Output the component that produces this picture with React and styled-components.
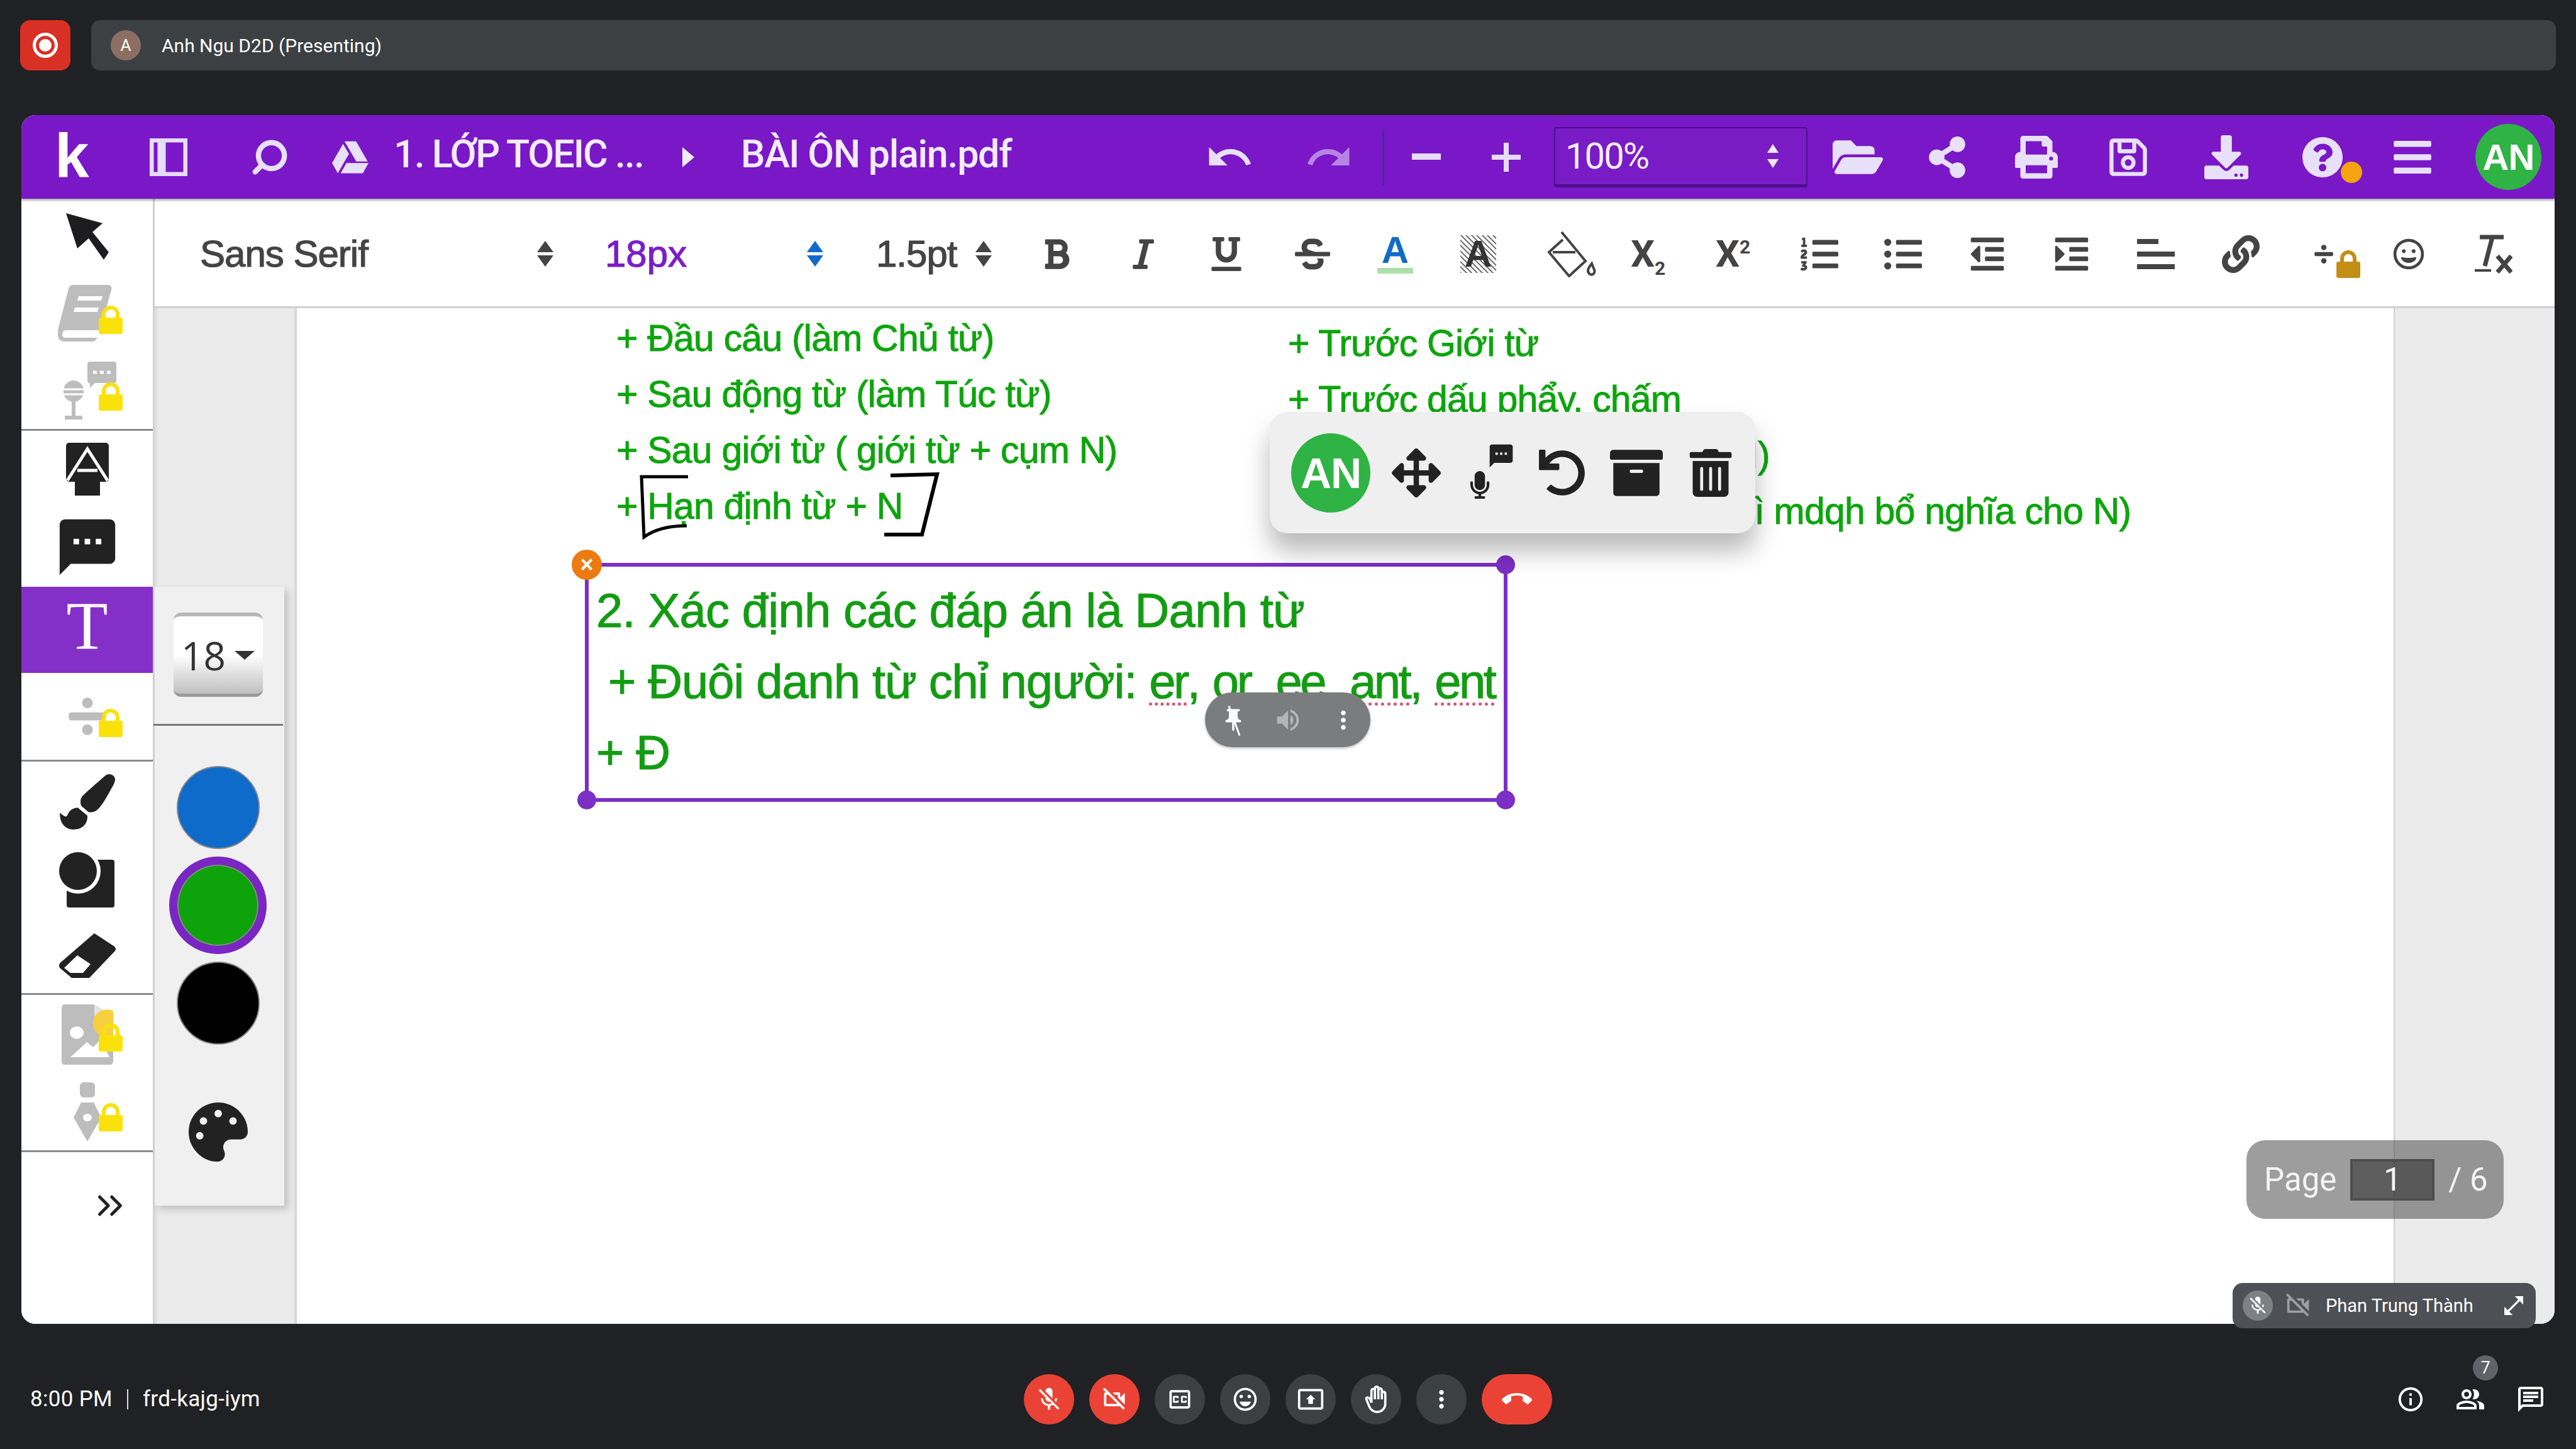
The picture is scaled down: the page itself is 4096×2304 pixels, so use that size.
import React from "react";
import styled, { createGlobalStyle } from "styled-components";
import {
  FaGoogleDrive, FaFolderOpen, FaShareAlt, FaPrint, FaRegSave, FaDownload, FaQuestionCircle, FaBars,
  FaBold, FaItalic, FaUnderline, FaStrikethrough, FaListOl, FaListUl, FaOutdent, FaIndent, FaLink, FaDivide,
  FaRegGrin, FaPaintBrush, FaPalette, FaArrowsAlt, FaUndo, FaArchive, FaTrashAlt, FaMicrophone,
} from "react-icons/fa";
import {
  MdUndo, MdRedo, MdSms, MdMicOff, MdOutlineVideocamOff, MdOutlineClosedCaption, MdOutlineEmojiEmotions,
  MdOutlinePresentToAll, MdOutlineBackHand, MdMoreVert, MdCallEnd, MdInfoOutline, MdOutlinePeopleAlt, MdOutlineChat,
  MdOutlineOpenInFull, MdVolumeUp, MdPushPin,
} from "react-icons/md";
import { Search, ChevronsRight } from "lucide-react";

const Global = createGlobalStyle`
  html, body { margin: 0; padding: 0; background: #202124; }
  * { box-sizing: border-box; }
`;

const Screen = styled.div`
  width: 4096px; height: 2304px; background: #202124; display: flex; flex-direction: column;
  font-family: "Liberation Sans", Arial, sans-serif; overflow: hidden; position: relative;
`;
const TopBar = styled.div`
  display: flex; gap: 33px; padding: 32px 32px 0 32px; height: 183px;
`;
const RecordBtn = styled.div`
  width: 80px; height: 80px; background: #d93025; border-radius: 16px; display: flex; align-items: center; justify-content: center;
`;
const RecordRing = styled.div`
  width: 40px; height: 40px; border-radius: 50%; border: 5px solid #fff; display: flex; align-items: center; justify-content: center;
  &::after { content: ""; width: 20px; height: 20px; border-radius: 50%; background: #fff; }
`;
const PresenterBar = styled.div`
  flex: 1; height: 80px; background: #3c4043; border-radius: 14px; display: flex; align-items: center; padding-left: 31px; gap: 33px;
  color: #fff; font-family: Roboto, sans-serif; font-size: 30px;
`;
const SmallAvatar = styled.div`
  width: 48px; height: 48px; border-radius: 50%; background: #8d6e63; color: #fff; display: flex; align-items: center; justify-content: center; font-size: 26px;
`;

const Window = styled.div`
  margin: 0 34px; height: 1922px; background: #fff; border-radius: 22px; overflow: hidden; display: flex; flex-direction: column;
`;
const Header = styled.div`
  height: 133px; background: #7a18c8; display: flex; align-items: center; padding-left: 57px; color: #e8e0f8;
  box-shadow: 0 3px 3px rgba(0,0,0,.3); position: relative; z-index: 3;
`;
const Slot = styled.div`
  width: ${p => p.$w}px; flex: none; display: flex; align-items: center;
  color: ${p => p.$color || "inherit"}; opacity: ${p => p.$dim || 1};
`;
const Logo = styled.span`
  font-size: 98px; font-weight: 700; color: #fff; line-height: 1; margin-left: -4px; margin-bottom: 6px;
`;
const HeadText = styled.span`
  font-family: Roboto, sans-serif; font-weight: 500; font-size: 61px; color: #f2ecfc; white-space: nowrap; letter-spacing: ${p => p.$ls || 0}px; margin-bottom: 10px;
`;
const Triangle = styled.div`
  width: 0; height: 0; border-left: 19px solid #eee; border-top: 16px solid transparent; border-bottom: 16px solid transparent;
`;
const Sep = styled.div`
  width: 3px; height: 90px; background: #4a2a9a;
`;
const ZoomSelect = styled.div`
  width: 403px; height: 96px; background: #7a1cc6; border: 2px solid #4b0f8c; border-bottom-width: 5px; border-radius: 4px;
  display: flex; align-items: center; justify-content: space-between; padding: 0 44px 0 16px; color: #f5effc;
  font-family: Roboto, sans-serif; font-size: 58px; letter-spacing: -2px;
`;
const ArrowsCol = styled.div`
  display: flex; flex-direction: column; align-items: center; gap: ${p => p.$gap || 5}px;
  &::before, &::after { content: ""; width: 0; height: 0; border-left: ${p => p.$s || 13}px solid transparent; border-right: ${p => p.$s || 13}px solid transparent; }
  &::before { border-bottom: ${p => p.$h || 18}px solid ${p => p.$c}; }
  &::after { border-top: ${p => p.$h || 18}px solid ${p => p.$c}; }
`;
const Avatar = styled.div`
  width: ${p => p.$d}px; height: ${p => p.$d}px; border-radius: 50%; background: #2fb344; color: #fff; font-weight: 700; flex: none;
  font-size: ${p => p.$fs}px; display: flex; align-items: center; justify-content: center; letter-spacing: -1px;
`;
const HelpWrap = styled.div`
  position: relative; display: flex;
`;
const HelpDot = styled.div`
  position: absolute; left: 62px; top: 40px; width: 34px; height: 34px; border-radius: 50%; background: #f5a30f;
`;

const Body = styled.div`
  flex: 1; display: flex; min-height: 0;
`;
const ToolCol = styled.div`
  width: 209px; flex: none; display: flex; flex-direction: column; background: #fff; position: relative; z-index: 2;
`;
const ToolRow = styled.div`
  height: ${p => p.$h}px; flex: none; position: relative; display: flex; align-items: center; justify-content: center;
  padding-left: ${p => p.$pl || 0}px;
  background: ${p => p.$active ? "#8430c8" : "transparent"}; color: ${p => p.$active ? "#fff" : p.$locked ? "#bdbdbd" : "#222"};
  border-bottom: ${p => p.$rule ? "3px solid #8a8a8a" : "none"};
`;
const SerifT = styled.span`
  font-family: "Liberation Serif", serif; font-size: 108px; line-height: 1; margin-bottom: 14px;
`;
const LockMark = styled.svg`
  position: absolute; left: 123px; top: ${p => p.$top}px; width: 38px; height: 46px;
`;

const Main = styled.div`
  flex: 1; display: flex; flex-direction: column; min-width: 0;
`;
const FormatBar = styled.div`
  height: 174px; flex: none; display: flex; align-items: center; padding: 4px 0 0 72px; color: #444; background: #fff;
  border-bottom: 3px solid #cfcfcf; border-left: 3px solid #cfcfcf; position: relative; z-index: 2;
`;
const FmtText = styled.span`
  font-size: 60px; color: ${p => p.$c || "#444"}; white-space: nowrap; letter-spacing: ${p => p.$ls ?? -1}px; -webkit-text-stroke: 1.2px ${p => p.$c || "#444"};
`;
const TextIconA = styled.div`
  width: 57px; display: flex; flex-direction: column; align-items: center; font-size: 60px; font-weight: 700; color: #0f6cc9; line-height: 52px;
  &::after { content: ""; width: 100%; height: 9px; background: #aadfa8; margin-top: 2px; }
`;
const HatchA = styled.div`
  width: 57px; height: 60px; display: flex; align-items: center; justify-content: center; font-size: 60px; font-weight: 700; color: #333;
  background: repeating-linear-gradient(45deg, #777 0 2px, #fff 2px 6px), #fff;
`;
const ScriptX = styled.span`
  font-family: Roboto, sans-serif; font-weight: 700; font-size: 60px; color: #444; line-height: 1;
  sub, sup { font-size: 30px; line-height: 0; }
`;

const Canvas = styled.div`
  flex: 1; position: relative; background: #ebebeb; overflow: hidden; display: flex; padding-left: 229px;
  box-shadow: inset 8px 0 6px -4px rgba(0,0,0,.12);
`;
const Sheet = styled.div`
  width: 3334px; height: 100%; background: #fff; display: flex; padding: 4px 0 0 508px;
  box-shadow: -3px 0 4px rgba(0,0,0,.12), 2px 0 0 rgba(0,0,0,.12);
`;
const PdfCol = styled.div`
  width: ${p => p.$w}px; flex: none; padding-top: ${p => p.$pt || 0}px;
`;
const PdfLine = styled.div`
  height: 89px; line-height: 89px; font-size: 59px; letter-spacing: -0.8px; color: #0da50d; white-space: nowrap; padding-left: ${p => p.$pl || 0}px;
  -webkit-text-stroke: 0.9px #0da50d;
`;
const Ink = styled.svg`
  position: absolute; left: 775px; top: 262px; width: 490px; height: 120px; overflow: visible;
`;

const SidePanel = styled.div`
  position: absolute; left: 3px; top: 443px; width: 206px; height: 984px; background: #f0f0f0; display: flex; flex-direction: column; align-items: center;
  padding-right: 5px; box-shadow: 6px 6px 12px rgba(0,0,0,.18);
`;
const SizeDrop = styled.div`
  width: 142px; height: 134px; margin-top: 41px; border-radius: 12px; border-top: 6px solid #b6b6b6; border-bottom: 5px solid #9a9a9a;
  background: linear-gradient(#fff 50%, #bfbfbf); display: flex; align-items: center; justify-content: center; gap: 14px;
  font-family: "Open Sans", sans-serif; font-size: 62px; color: #333;
`;
const Caret = styled.div`
  width: 0; height: 0; border-left: 16px solid transparent; border-right: 16px solid transparent; border-top: 14px solid #333;
`;
const PanelRule = styled.div`
  width: 206px; height: 3px; background: #777; margin: 43px 0 64px; flex: none;
`;
const Swatch = styled.div`
  width: ${p => p.$ring ? 155 : 132}px; height: ${p => p.$ring ? 155 : 132}px; border-radius: 50%; background: ${p => p.$c};
  border: ${p => p.$ring ? "13px solid #7a26c4" : "2px solid #888"}; margin-bottom: 12px; flex: none;
  ${p => p.$ring ? "box-shadow: inset 0 0 0 2px #888;" : ""}
`;
const PaletteWrap = styled.div`
  margin-top: 80px; color: #222; display: flex;
`;

const TextBox = styled.div`
  position: absolute; left: 687px; top: 405px; width: 1467px; height: 380px; border: 6px solid #7b2fc4; padding: 13px 0 0 12px;
`;
const BoxLine = styled.div`
  height: 113px; line-height: 113px; font-size: 76px; letter-spacing: ${p => p.$ls ?? -1.1}px; color: #139c13; white-space: nowrap; padding-left: ${p => p.$pl || 0}px;
  -webkit-text-stroke: 1px #139c13;
`;
const Spell = styled.span`
  letter-spacing: -3.5px; text-decoration: underline dotted #d9536a 5px; text-underline-offset: 7px; -webkit-text-stroke: 1px #139c13;
`;
const Handle = styled.div`
  position: absolute; width: 30px; height: 30px; border-radius: 50%; background: #7b2fc4;
  ${p => p.$top ? "top: -18px;" : "bottom: -18px;"}
  ${p => p.$left ? "left: -18px;" : "right: -18px;"}
`;
const CloseDot = styled.div`
  position: absolute; left: -27px; top: -27px; width: 48px; height: 48px; border-radius: 50%; background: #ec7b12; color: #fff; font-size: 36px; font-weight: 700;
  display: flex; align-items: center; justify-content: center;
`;
const FloatBar = styled.div`
  position: absolute; left: 1776px; top: 165px; width: 772px; height: 193px; background: #efefef; border-radius: 28px;
  box-shadow: 0 28px 40px rgba(0,0,0,.28); display: flex; align-items: center; padding-left: 34px; color: #222;
`;
const FloatSlot = styled.div`
  width: ${p => p.$w}px; flex: none; display: flex; align-items: center; position: relative; height: 90px;
`;
const MiniBubble = styled.div`
  position: absolute; left: 30px; top: -4px; color: #222; display: flex;
`;
const MiniMic = styled.div`
  position: absolute; left: -4px; top: 42px; color: #222; display: flex;
`;
const MutePill = styled.div`
  position: absolute; left: 1673px; top: 611px; width: 263px; height: 87px; background: #7b7c7e; border-radius: 44px; display: flex; align-items: center;
  justify-content: space-between; padding: 0 20px 0 24px; color: #fff; box-shadow: 0 2px 4px rgba(0,0,0,.25);
`;
const PinWrap = styled.div`
  position: relative; display: flex;
  &::after { content: ""; position: absolute; left: 21px; top: -3px; width: 3px; height: 50px; background: #fff; transform: rotate(-20deg); }
`;
const PagePill = styled.div`
  position: absolute; left: 3329px; top: 1323px; width: 409px; height: 125px; border-radius: 30px; background: rgba(70,70,70,.53);
  display: flex; align-items: center; color: #f4f4f4; font-family: Roboto, sans-serif; font-size: 51px; padding-left: 28px;
`;
const PageInput = styled.div`
  width: 134px; height: 66px; margin: 0 22px; background: rgba(40,40,40,.55); border: 4px solid #4d4d4d; display: flex; align-items: center; justify-content: center;
`;
const NameTag = styled.div`
  position: absolute; left: 3550px; top: 2040px; width: 482px; height: 72px; background: #4d5054; border-radius: 16px; display: flex; align-items: center;
  padding-left: 16px; color: #fff; font-family: Roboto, sans-serif; font-size: 29px; z-index: 5;
`;
const MicDot = styled.div`
  width: 48px; height: 48px; border-radius: 50%; background: #7c8185; display: flex; align-items: center; justify-content: center; margin-right: 17px; flex: none;
`;
const TagName = styled.span`
  margin: 0 42px 0 21px; white-space: nowrap; width: 237px;
`;

const BottomBar = styled.div`
  flex: 1; display: grid; grid-template-columns: 1fr auto 1fr; align-items: center; color: #fff; padding: 40px 48px 0 48px; font-family: Roboto, sans-serif;
`;
const MeetInfo = styled.div`
  display: flex; align-items: center; font-size: 35px; letter-spacing: .3px; gap: 23px;
`;
const Divider = styled.div`
  width: 2px; height: 32px; background: #dadce0;
`;
const Controls = styled.div`
  display: flex; gap: 24px; justify-content: center;
`;
const CtlBtn = styled.div`
  width: ${p => p.$w || 80}px; height: 80px; border-radius: 40px; background: ${p => p.$red ? "#ea4335" : "#3c4043"}; display: flex; align-items: center; justify-content: center; color: #fff;
`;
const RightBtns = styled.div`
  display: flex; justify-content: flex-end; align-items: center; gap: 48px;
`;
const PeopleWrap = styled.div`
  position: relative; display: flex;
`;
const Badge = styled.div`
  position: absolute; left: 28px; top: -46px; width: 40px; height: 40px; border-radius: 50%; background: #5f6368; font-size: 27px; display: flex; align-items: center; justify-content: center;
`;

const SmallLockSvg = styled.svg`
  width: 40px; height: 46px; margin: 30px 0 0 2px;
`;
function LockSmall() {
  return (
    <SmallLockSvg viewBox="0 0 38 46">
      <path d="M9 24V15a10 10 0 0 1 20 0v9" fill="none" stroke="#c18f16" strokeWidth="6" />
      <rect x="0" y="20" width="38" height="26" rx="3" fill="#c18f16" />
    </SmallLockSvg>
  );
}
const Lock = ({ top, color = "#fbe10a" }) => (
  <LockMark $top={top} viewBox="0 0 38 46">
    <path d="M8 24V15a11 11 0 0 1 22 0v9" fill="none" stroke={color} strokeWidth="6" />
    <rect x="0" y="20" width="38" height="26" rx="3" fill={color} />
  </LockMark>
);
const Arrow = () => (
  <svg width="72" height="78" viewBox="0 0 72 78"><path d="M2 2 L60 18 L44 32 L70 64 L62 76 L38 42 L20 58 Z" fill="#1d1d1f" /></svg>
);
const BookIcon = () => (
  <svg width="88" height="90" viewBox="0 0 88 90" style={{ marginRight: 8 }}>
    <path d="M26 0 H80 Q88 0 86 8 L68 72 H14 Q8 72 8 80 Q8 84 14 84 H64 Q60 90 56 90 H12 Q0 90 1 76 Q1 70 3 64 L18 6 Q20 0 26 0 Z" fill="#bdbdbd" />
    <path d="M34 18 H72 L70 25 H32 Z M28 36 H66 L64 43 H26 Z" fill="#fff" />
  </svg>
);
const ABox = () => (
  <svg width="68" height="84" viewBox="0 0 68 84">
    <rect width="68" height="62" rx="5" fill="#222" />
    <path d="M14 58 L34 30 L54 58 V84 H14 Z" fill="#222" />
    <path d="M2 60 L34 10 L66 60 M18 44 H50" fill="none" stroke="#fff" strokeWidth="5" />
  </svg>
);
const Shapes = () => (
  <svg width="90" height="88" viewBox="0 0 90 88">
    <rect x="12" y="12" width="76" height="76" rx="4" fill="#222" />
    <ellipse cx="30" cy="30" rx="36" ry="36" fill="#fff" />
    <circle cx="30" cy="30" r="30" fill="#222" />
  </svg>
);
const Eraser = () => (
  <svg width="94" height="78" viewBox="0 0 94 78">
    <path d="M58 3 L90 24 Q94 28 90 32 L50 74 H22 L3 58 Q0 52 6 48 Z" fill="#222" />
    <path d="M31 38 L52 52 L40 66 H20 L10 58 Z" fill="#fff" />
  </svg>
);
const BubbleMic = () => (
  <svg width="92" height="92" viewBox="0 0 92 92">
    <path d="M50 0 H88 Q92 0 92 4 V30 Q92 34 88 34 H58 L50 42 V34 Q46 34 46 30 V4 Q46 0 50 0 Z" fill="#bdbdbd" />
    <path d="M55 17 h6 M66 17 h6 M77 17 h6" stroke="#fff" strokeWidth="5" />
    <rect x="8" y="30" width="32" height="34" rx="16" fill="#bdbdbd" />
    <path d="M8 44 H40 M8 52 H40" stroke="#fff" strokeWidth="3" />
    <path d="M24 64 V86 M10 89 H38" stroke="#bdbdbd" strokeWidth="6" />
  </svg>
);
const ImageDoc = () => (
  <svg width="82" height="96" viewBox="0 0 82 96">
    <path d="M5 0 H52 L82 20 V90 Q82 96 76 96 H5 Q0 96 0 90 V6 Q0 0 5 0 Z" fill="#bdbdbd" />
    <path d="M52 0 L82 20 H52 Z" fill="#e4e4e4" />
    <ellipse cx="24" cy="45" rx="11" ry="10" fill="#fff" />
    <path d="M14 84 L40 60 L50 68 L62 56 L76 84 Z" fill="#fff" />
    <circle cx="72" cy="30" r="22" fill="#f8cf3e" />
  </svg>
);
const PenTool = () => (
  <svg width="44" height="94" viewBox="0 0 44 94">
    <rect x="10" y="0" width="24" height="24" rx="6" fill="#bdbdbd" />
    <path d="M12 32 H32 L44 56 L22 94 L0 56 Z" fill="#bdbdbd" />
    <ellipse cx="22" cy="56" rx="7" ry="6" fill="#fff" />
  </svg>
);
const SidebarIcon = () => (
  <svg width="60" height="60" viewBox="0 0 60 60"><path d="M3 3 H57 V57 H3 Z M16 3 H22 V57 H16 Z" fill="none" stroke="#e4dcf8" strokeWidth="7" /></svg>
);
const Bucket = () => (
  <svg width="80" height="74" viewBox="0 0 80 74" fill="none" stroke="#444" strokeWidth="4">
    <path d="M24 2 L62 48 L36 72 L4 34 L26 14" />
    <path d="M10 34 H46" />
    <path d="M72 52 C66 60 64 64 68 68 C72 72 78 68 76 62 Z" />
  </svg>
);
const AlignIcon = () => (
  <svg width="60" height="52" viewBox="0 0 60 52"><path d="M0 6 H34 M0 26 H60 M0 46 H60" stroke="#444" strokeWidth="8" /></svg>
);
const ClearIcon = () => (
  <svg width="60" height="62" viewBox="0 0 60 62" fill="none" stroke="#444">
    <path d="M8 4 H46" strokeWidth="7" />
    <path d="M28 4 L16 50" strokeWidth="7" />
    <path d="M0 57 H26" strokeWidth="4" />
    <path d="M36 34 L58 60 M58 34 L36 60" strokeWidth="7" />
  </svg>
);

export default function App() {
  return (
    <Screen>
      <Global />
      <TopBar>
        <RecordBtn><RecordRing /></RecordBtn>
        <PresenterBar>
          <SmallAvatar>A</SmallAvatar>
          <span>Anh Ngu D2D (Presenting)</span>
        </PresenterBar>
      </TopBar>

      <Window>
        <Header>
          <Slot $w={147}><Logo>k</Logo></Slot>
          <Slot $w={164}><SidebarIcon /></Slot>
          <Slot $w={126}><Search size={62} strokeWidth={3.2} style={{ transform: "scaleX(-1)", marginLeft: -4 }} /></Slot>
          <Slot $w={98}><FaGoogleDrive size={58} /></Slot>
          <Slot $w={459}><HeadText $ls={-2}>1. LỚP TOEIC ...</HeadText></Slot>
          <Slot $w={93}><Triangle /></Slot>
          <Slot $w={738}><HeadText $ls={-1.3}>BÀI ÔN plain.pdf</HeadText></Slot>
          <Slot $w={158}><MdUndo size={78} /></Slot>
          <Slot $w={124} $dim={0.55}><MdRedo size={78} /></Slot>
          <Slot $w={47}><Sep /></Slot>
          <Slot $w={127}><svg width="46" height="12"><rect width="46" height="10" fill="#e4dcf8" /></svg></Slot>
          <Slot $w={99}><svg width="46" height="46" viewBox="0 0 46 46"><path d="M23 0 V46 M0 23 H46" stroke="#e4dcf8" strokeWidth="8" /></svg></Slot>
          <Slot $w={443}><ZoomSelect>100%<ArrowsCol $c="#f0e8fb" $s={9} $h={14} $gap={10} /></ZoomSelect></Slot>
          <Slot $w={149}><FaFolderOpen size={80} /></Slot>
          <Slot $w={141}><FaShareAlt size={66} /></Slot>
          <Slot $w={146}><FaPrint size={68} /></Slot>
          <Slot $w={155}><FaRegSave size={68} /></Slot>
          <Slot $w={155}><FaDownload size={70} /></Slot>
          <Slot $w={142}><HelpWrap><FaQuestionCircle size={66} /><HelpDot /></HelpWrap></Slot>
          <Slot $w={134}><FaBars size={68} /></Slot>
          <Avatar $d={105} $fs={58}>AN</Avatar>
        </Header>

        <Body>
          <ToolCol>
            <ToolRow $h={119}><Arrow /></ToolRow>
            <ToolRow $h={125} $locked><BookIcon /><Lock top={50} /></ToolRow>
            <ToolRow $h={125} $locked $rule><BubbleMic /><Lock top={47} /></ToolRow>
            <ToolRow $h={121}><ABox /></ToolRow>
            <ToolRow $h={127}><MdSms size={106} /></ToolRow>
            <ToolRow $h={137} $active><SerifT>T</SerifT></ToolRow>
            <ToolRow $h={141} $locked $rule><FaDivide size={68} /><Lock top={56} /></ToolRow>
            <ToolRow $h={127}><FaPaintBrush size={88} /></ToolRow>
            <ToolRow $h={122}><Shapes /></ToolRow>
            <ToolRow $h={122} $rule><Eraser /></ToolRow>
            <ToolRow $h={125} $locked><ImageDoc /><Lock top={44} /></ToolRow>
            <ToolRow $h={125} $locked $rule><PenTool /><Lock top={46} /></ToolRow>
            <ToolRow $h={170} $pl={72}><ChevronsRight size={66} strokeWidth={1.8} /></ToolRow>
          </ToolCol>

          <Main>
            <FormatBar>
              <Slot $w={536}><FmtText>Sans Serif</FmtText></Slot>
              <Slot $w={108}><ArrowsCol $c="#444" /></Slot>
              <Slot $w={321}><FmtText $c="#7a1fc8" $ls={0}>18px</FmtText></Slot>
              <Slot $w={110}><ArrowsCol $c="#0f6cc9" /></Slot>
              <Slot $w={158}><FmtText>1.5pt</FmtText></Slot>
              <Slot $w={102}><ArrowsCol $c="#444" /></Slot>
              <Slot $w={138}><FaBold size={54} /></Slot>
              <Slot $w={132}><FaItalic size={54} /></Slot>
              <Slot $w={136}><FaUnderline size={54} /></Slot>
              <Slot $w={131}><FaStrikethrough size={56} /></Slot>
              <Slot $w={132}><TextIconA>A</TextIconA></Slot>
              <Slot $w={137}><HatchA>A</HatchA></Slot>
              <Slot $w={134}><Bucket /></Slot>
              <Slot $w={135}><ScriptX>X<sub>2</sub></ScriptX></Slot>
              <Slot $w={135}><ScriptX>X<sup>2</sup></ScriptX></Slot>
              <Slot $w={133}><FaListOl size={60} /></Slot>
              <Slot $w={134}><FaListUl size={60} /></Slot>
              <Slot $w={134}><FaOutdent size={60} /></Slot>
              <Slot $w={134}><FaIndent size={60} /></Slot>
              <Slot $w={135}><AlignIcon /></Slot>
              <Slot $w={145}><FaLink size={60} /></Slot>
              <Slot $w={127}><FaDivide size={34} /><LockSmall /></Slot>
              <Slot $w={130}><FaRegGrin size={50} /></Slot>
              <Slot $w={60}><ClearIcon /></Slot>
            </FormatBar>

            <Canvas>
              <Sheet>
                <PdfCol $w={1068}>
                  <PdfLine>+ Đầu câu (làm Chủ từ)</PdfLine>
                  <PdfLine>+ Sau động từ (làm Túc từ)</PdfLine>
                  <PdfLine>+ Sau giới từ ( giới từ + cụm N)</PdfLine>
                  <PdfLine>+ Hạn định từ + N</PdfLine>
                </PdfCol>
                <PdfCol $w={1600} $pt={8}>
                  <PdfLine>+ Trước Giới từ</PdfLine>
                  <PdfLine>+ Trước dấu phẩy, chấm</PdfLine>
                  <PdfLine $pl={37}>+ Sau danh từ (mdqh cho N)</PdfLine>
                  <PdfLine $pl={74}>+ Sau danh từ đủ nghĩa thì mdqh bổ nghĩa cho N)</PdfLine>
                </PdfCol>
              </Sheet>

              <Ink viewBox="0 0 490 120" fill="none" stroke="#000">
                <path d="M76 6 H2 L6 102 Q30 84 74 84" strokeWidth="5" />
                <path d="M398 4 L472 2 L448 98 H388" strokeWidth="6" />
              </Ink>

              <SidePanel>
                <SizeDrop>18<Caret /></SizeDrop>
                <PanelRule />
                <Swatch $c="#0f6bc9" />
                <Swatch $c="#0ea30a" $ring />
                <Swatch $c="#000" />
                <PaletteWrap><FaPalette size={94} /></PaletteWrap>
              </SidePanel>

              <TextBox>
                <BoxLine $ls={-0.7}>2. Xác định các đáp án là Danh từ</BoxLine>
                <BoxLine $pl={19}>+ Đuôi danh từ chỉ người: <Spell>er</Spell>, <Spell>or</Spell>, <Spell>ee</Spell>, <Spell>ant</Spell>, <Spell>ent</Spell></BoxLine>
                <BoxLine>+ Đ</BoxLine>
                <CloseDot>×</CloseDot>
                <Handle $top />
                <Handle $left />
                <Handle />
              </TextBox>

              <FloatBar>
                <FloatSlot $w={160}><Avatar $d={126} $fs={68}>AN</Avatar></FloatSlot>
                <FloatSlot $w={122}><FaArrowsAlt size={78} /></FloatSlot>
                <FloatSlot $w={112}>
                  <MiniMic><FaMicrophone size={44} /></MiniMic>
                  <MiniBubble><MdSms size={44} /></MiniBubble>
                </FloatSlot>
                <FloatSlot $w={113}><FaUndo size={74} /></FloatSlot>
                <FloatSlot $w={123}><FaArchive size={84} /></FloatSlot>
                <FloatSlot $w={74}><FaTrashAlt size={76} /></FloatSlot>
              </FloatBar>

              <MutePill>
                <PinWrap><MdPushPin size={42} /></PinWrap>
                <MdVolumeUp size={46} color="#b5b5b5" />
                <MdMoreVert size={46} />
              </MutePill>

              <PagePill>
                Page
                <PageInput>1</PageInput>
                / 6
              </PagePill>
            </Canvas>
          </Main>
        </Body>
      </Window>

      <NameTag>
        <MicDot><MdMicOff size={34} /></MicDot>
        <MdOutlineVideocamOff size={46} color="#9aa0a6" />
        <TagName>Phan Trung Thành</TagName>
        <MdOutlineOpenInFull size={40} />
      </NameTag>

      <BottomBar>
        <MeetInfo>8:00 PM<Divider />frd-kajg-iym</MeetInfo>
        <Controls>
          <CtlBtn $red><MdMicOff size={44} /></CtlBtn>
          <CtlBtn $red><MdOutlineVideocamOff size={44} /></CtlBtn>
          <CtlBtn><MdOutlineClosedCaption size={44} /></CtlBtn>
          <CtlBtn><MdOutlineEmojiEmotions size={44} /></CtlBtn>
          <CtlBtn><MdOutlinePresentToAll size={44} /></CtlBtn>
          <CtlBtn><MdOutlineBackHand size={44} /></CtlBtn>
          <CtlBtn><MdMoreVert size={44} /></CtlBtn>
          <CtlBtn $red $w={112}><MdCallEnd size={48} /></CtlBtn>
        </Controls>
        <RightBtns>
          <MdInfoOutline size={46} />
          <PeopleWrap>
            <MdOutlinePeopleAlt size={48} />
            <Badge>7</Badge>
          </PeopleWrap>
          <MdOutlineChat size={48} />
        </RightBtns>
      </BottomBar>
    </Screen>
  );
}
